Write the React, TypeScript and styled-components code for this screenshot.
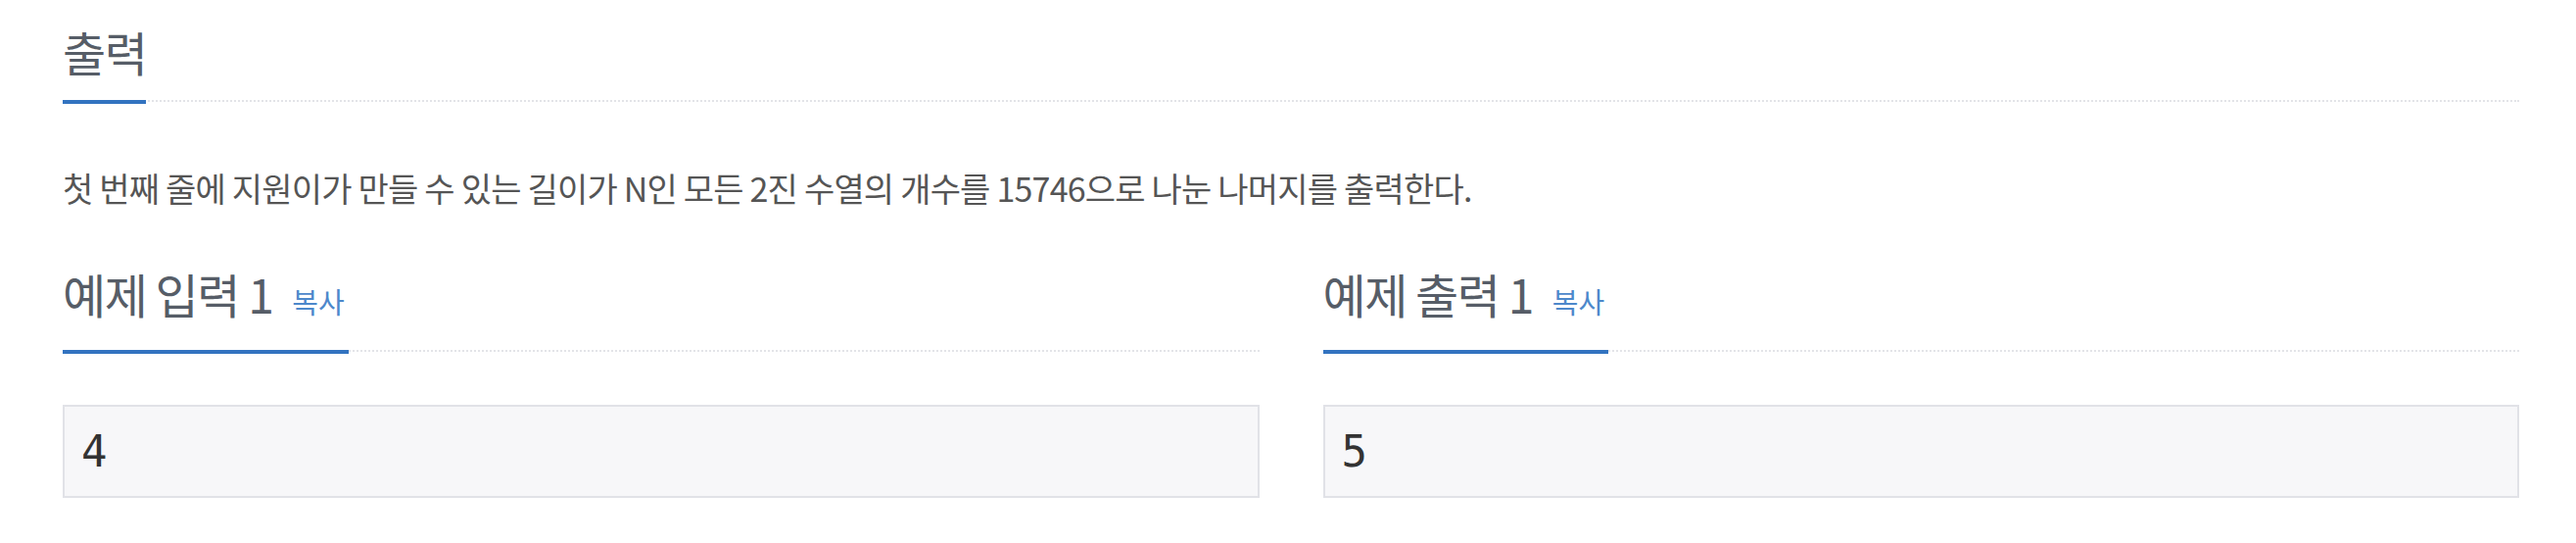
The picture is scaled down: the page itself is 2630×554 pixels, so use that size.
import React from 'react';
import styled, { createGlobalStyle } from 'styled-components';

const GlobalStyle = createGlobalStyle`
    html, body {
        margin: 0;
        padding: 0;
        background: #ffffff;
    }
    body {
        font-family: "Noto Sans CJK KR", "Noto Sans", sans-serif;
    }
`

const Spage = styled.div`
    width: 2508px;
    padding: 26px 58px 0 64px;
`

const Ssection = styled.section`
    min-width: 0;
`

const Sheadline = styled.div`
    border-bottom: 2px dotted #e3e4e8;
`

const Stitle = styled.h2`
    display: inline-block;
    margin: 0 0 -4px 0;
    padding: 0 0 24px 0;
    font-size: 48px;
    line-height: 52px;
    font-weight: 400;
    letter-spacing: -1.5px;
    color: #565d67;
    border-bottom: 4px solid #3273c0;
`

const Scopy = styled.span`
    margin-left: 20px;
    padding-right: 4px;
    font-size: 29px;
    letter-spacing: 0;
    color: #4d88cb;
    cursor: pointer;
`

const Sdesc = styled.p`
    margin: 58px 0 0 0;
    font-size: 34px;
    line-height: 60px;
    letter-spacing: -0.8px;
    color: #555555;
`

const Ssamples = styled.div`
    display: grid;
    grid-template-columns: 1fr 1fr;
    column-gap: 65px;
    margin-top: 51px;
`

const Spre = styled.pre`
    margin: 54px 0 0 0;
    padding: 19px 17px;
    font-family: "DejaVu Sans Mono", "Liberation Mono", monospace;
    font-size: 44px;
    line-height: 53px;
    color: #333333;
    background: #f7f7f9;
    border: 2px solid #e1e2e7;
`

const Headline: React.FC<{ title: string; copy?: boolean }> = ({ title, copy }) => (
    <Sheadline>
        <Stitle>
            {title}
            {copy && <Scopy>복사</Scopy>}
        </Stitle>
    </Sheadline>
)

const samples = [
    { title: '예제 입력 1', data: '4' },
    { title: '예제 출력 1', data: '5' },
]

const App: React.FC = () => {
    return (
        <Spage>
            <GlobalStyle />
            <Ssection>
                <Headline title="출력" />
                <Sdesc>
                    첫 번째 줄에 지원이가 만들 수 있는 길이가 N인 모든 2진 수열의 개수를 15746으로 나눈 나머지를 출력한다.
                </Sdesc>
            </Ssection>
            <Ssamples>
                {samples.map((s) => (
                    <Ssection key={s.title}>
                        <Headline title={s.title} copy />
                        <Spre>{s.data}</Spre>
                    </Ssection>
                ))}
            </Ssamples>
        </Spage>
    );
};

export default App;
